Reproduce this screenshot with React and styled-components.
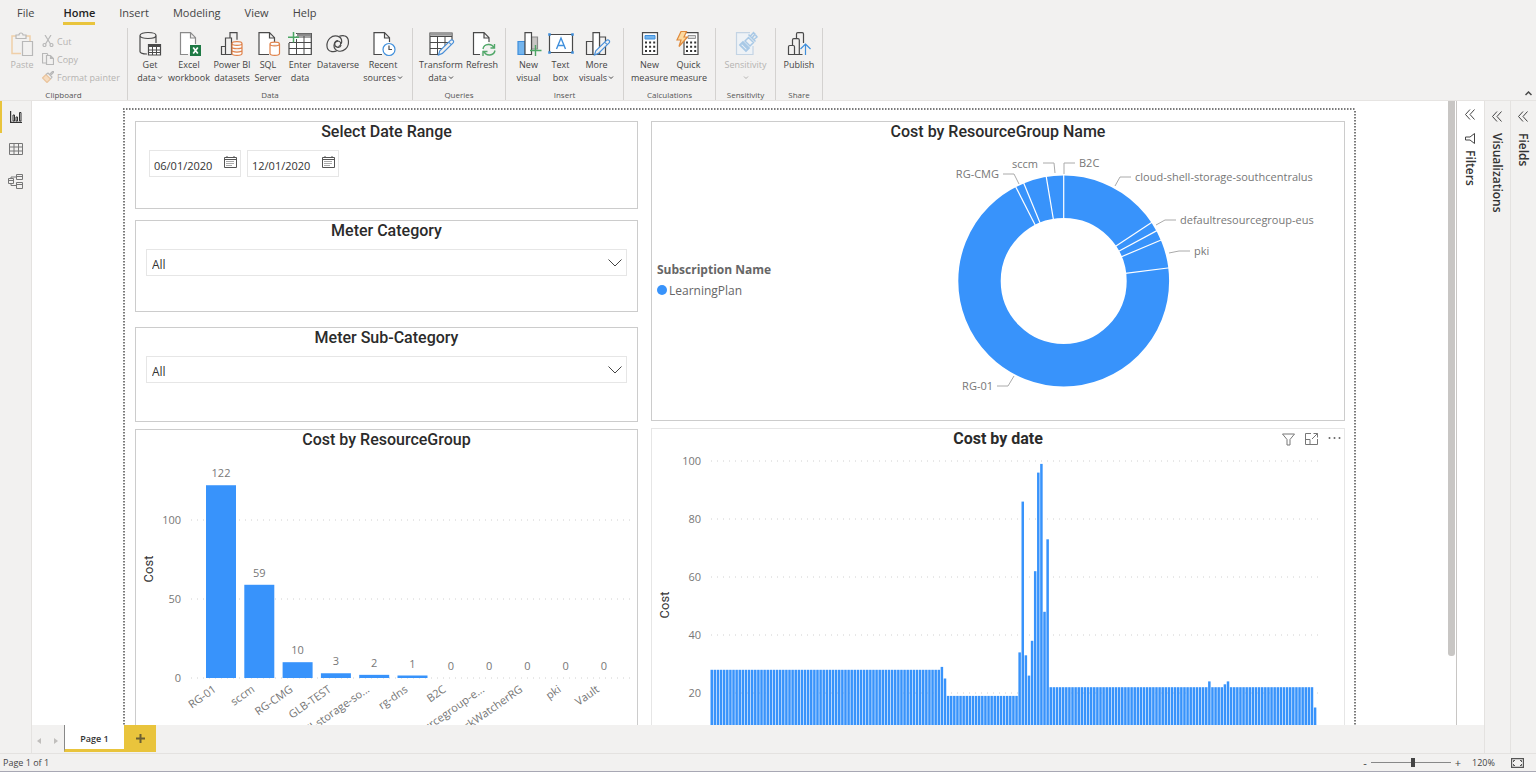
import React, { useState } from 'react';
import styled, { createGlobalStyle } from 'styled-components';

const BLUE = '#3893fb';
const YELLOW = '#e9c43c';

const GlobalStyle = createGlobalStyle`
    * {
        box-sizing: border-box;
    }
    body {
        margin: 0;
        background-color: #f2f1f0;
        color: #333;
        font-family: "Open Sans", "Noto Sans", sans-serif;
    }
    button, input, select {
        font-family: inherit;
        color: inherit;
    }
    button {
        background: transparent;
        border: none;
        padding: 0;
        cursor: pointer;
    }
`;

/* ---------- icons ---------- */

const Svg = ({ size = 24, w = size, h = size, box, children, ...rest }) => (
    <svg
        width={w}
        height={h}
        viewBox={box || `0 0 ${w} ${h}`}
        fill="none"
        stroke="#4a4a4a"
        strokeWidth="1.2"
        aria-hidden="true"
        {...rest}
    >
        {children}
    </svg>
);

const Pencil = () => (
    <path
        d="M9.5 23l1.3-4.3L21.5 8.4a1.7 1.7 0 0 1 2.6 2.5L13.4 21.4zM19.7 10.2l2.5 2.5"
        fill="#f2f1f0"
        stroke="#4a90d9"
    />
);

const icons = {
    paste: (
        <Svg>
            <path d="M11 21.500H2V4h4M16 4h4v5" stroke="#f0cfa8" strokeWidth="1.5" />
            <path d="M6 6.500h10V3h-3a2 2 0 0 0-4 0H6z" stroke="#b8b8b8" />
            <path d="M12.500 9.500h10v14h-10z" stroke="#b8b8b8" />
        </Svg>
    ),
    getData: (
        <Svg>
            <path d="M9 22c-4 0-7-1-7-2.500V3.500c0-4 16-4 16 0V11M2 3.500c0 4 16 4 16 0" />
            <path d="M10.500 12.500h12v10.500h-12z" fill="#fff" />
            <path d="M10.500 14h12" strokeWidth="2" />
            <path d="M10.500 18h12M10.500 20.500h12M14.500 13v10M18.500 13v10" strokeWidth="1" />
        </Svg>
    ),
    excel: (
        <Svg>
            <path d="M11 22.500H3.500V.7h10l5 5V12M13.500.7v5.300h5" fill="#fff" stroke="#8a8a8a" />
            <path d="M13 13h11v11H13z" fill="#1f7a45" stroke="none" />
            <path d="M16.200 15.500l4.600 6M20.800 15.500l-4.600 6" stroke="#fff" strokeWidth="1.700" />
        </Svg>
    ),
    datasets: (
        <Svg>
            <path d="M10 5.500V.7h7v7M5.500 22.500V6h6v16.500M1.500 22.500v-8h4v8zM5.500 22.500h6" />
            <path
                d="M12 11.500c0-2.500 10-2.500 10 0v10c0 2.500-10 2.500-10 0zM12 11.500c0 2.500 10 2.500 10 0M12 15c0 2.300 10 2.300 10 0M12 18.300c0 2.300 10 2.300 10 0"
                fill="#fff"
                stroke="#e0824a"
            />
        </Svg>
    ),
    sql: (
        <Svg>
            <path d="M13 22.500H3V.7h10.500l5 5V10M13.500.7v5.300h5" fill="#fff" />
            <path
                d="M14 12c0-2.500 9.500-2.500 9.500 0v9.500c0 2.500-9.500 2.500-9.500 0zM14 12c0 2.500 9.500 2.500 9.500 0"
                fill="#fff"
                stroke="#e0824a"
            />
        </Svg>
    ),
    enterData: (
        <Svg>
            <path d="M8 1.500h15.300v21H1V11" fill="#fff" />
            <path d="M9 2.700h14" stroke="#888" strokeWidth="2.500" />
            <path d="M1 10.500h22.300M1 16.500h22.300M8.500 7v15.500M16 4v18.500M8 5h15" strokeWidth="1" />
            <path d="M5.500 0v10.500M0 5.200h11" stroke="#4ca664" strokeWidth="1.500" />
        </Svg>
    ),
    dataverse: (
        <Svg>
            <path d="M18.500 3.800c5 1.200 5.200 9.200 1 13.200-4.300 4-11.500 2.400-11.500-3.400 0-3.200 2.700-5 5-4.300 2.500.8 2.300 4.700-.6 5.300" />
            <path d="M4.800 19.300c-5-1.200-5-9.200-.8-13.200 4.300-4 11.700-2.400 11.700 3.400 0 .8-.1 1.500-.5 2.200" />
            <path d="M4.800 19.300c3.500.8 6-.5 6-.5M18.500 3.800c-2.500-.6-5 .3-5 .3M12 8.500a3.400 3.400 0 1 0 3.200 4.600" />
        </Svg>
    ),
    recent: (
        <Svg>
            <path d="M11 22.500H3V.7h10.500l5 5V10M13.500.7v5.300h5" fill="#fff" />
            <circle cx="18" cy="17.500" r="6" fill="#fff" stroke="#3f8fdc" />
            <path d="M18 13.500v4h3" />
        </Svg>
    ),
    transform: (
        <Svg>
            <path d="M23 10V1H1v21.500h9" fill="#fff" />
            <path d="M1 2.500h22" stroke="#999" strokeWidth="2.500" />
            <path d="M1 4.500h22M1 10.500h19M1 16.500h12M8.500 5v17M16 5v9" strokeWidth="1" />
            <Pencil />
        </Svg>
    ),
    refresh: (
        <Svg>
            <path d="M10 22.500H3.500V.7H14l5 5V10M14 .7v5.300h5" fill="#fff" />
            <path
                d="M13 17c1-5.500 9-6 11-1M24.500 12v4h-4M25 18.500c-1 5.500-9 6-11 1M13 24v-4.500h4.500"
                stroke="#53a86a"
                strokeWidth="1.400"
            />
        </Svg>
    ),
    newVisual: (
        <Svg>
            <path d="M1 9.500h7v13H1z" fill="#74b5ee" stroke="#3f8fdc" />
            <path d="M14.500 5h6v12h-6z" fill="#c8c6c4" stroke="#8a8a8a" />
            <path d="M8 .7h6.500v21.800H8z" fill="#fff" />
            <path d="M18.500 13v11M13 18.500h11.500" stroke="#4ca664" strokeWidth="1.400" />
        </Svg>
    ),
    textBox: (
        <Svg w={26}>
            <path d="M1.500 2.500h23v18h-23z" fill="#fff" />
            <path d="M8.500 17L13 6l4.500 11M10 13.500h6" stroke="#3f8fdc" strokeWidth="1.400" />
            <path d="M.5 1.500h2v2h-2zM23.500 1.500h2v2h-2zM.5 19.500h2v2h-2zM23.500 19.500h2v2h-2z" fill="#3f8fdc" stroke="#3f8fdc" strokeWidth=".5" />
        </Svg>
    ),
    moreVisuals: (
        <Svg>
            <path d="M1.500 9.500H8v13H1.500z" />
            <path d="M14.500 5h6v17.500h-6z" />
            <path d="M8 .7h6.500v21.800H8z" fill="#fff" />
            <Pencil />
        </Svg>
    ),
    measure: (
        <Svg>
            <path d="M4.500.7h15v21.800h-15z" fill="#fff" />
            <path d="M7 3.500h10v3.500H7z" fill="#74b5ee" stroke="#3f8fdc" strokeWidth="1" />
            <path d="M7 10.500h10.500M7 14.700h10.500M7 18.900h10.500" stroke="#333" strokeWidth="2" strokeDasharray="2 2.100" />
        </Svg>
    ),
    quick: (
        <Svg>
            <path d="M7 .7h14v21.800H7z" fill="#fff" />
            <path d="M11 3.500h7.500v3H11z" fill="#ddd" stroke="#999" strokeWidth="1" />
            <path d="M9 10.500h10.500M9 14.700h10.500M9 18.900h10.500" stroke="#333" strokeWidth="2" strokeDasharray="2 2.100" />
            <path d="M4-.5h5.500L7 5h3.500L2 14.500 4 8H0z" fill="#fbd9a0" stroke="#e08a3c" />
        </Svg>
    ),
    sensitivity: (
        <Svg>
            <path d="M16 .7H2.500v21.800h16.500V14" stroke="#c4d4e4" fill="#eef2f6" />
            <path d="M6 13l3-3 6 6-3 3zM8 11l6 6" stroke="#a9c9e6" strokeWidth="1.800" />
            <path d="M11 9l3.500-3.500 5 5L16 14zM14.500 2.500l7 7M16.500 4l3-3.500 1.500 1.500-2.500 3.500M20 7.500L23 5l-1.500-2" stroke="#a9c9e6" strokeWidth="1.500" />
        </Svg>
    ),
    publish: (
        <Svg>
            <path d="M9.500 6V2q0-1.300 1.300-1.300h4.400q1.300 0 1.300 1.300v9M5.500 13V8q0-1.300 1.300-1.300h4.200q1.300 0 1.300 1.300v14.500M1.500 22.500v-7.700q0-1.300 1.300-1.300h3.400q1.300 0 1.300 1.300v7.700zM7.500 22.500h8" />
            <path d="M18.500 23V12M13.500 17l5-5 5 5" stroke="#3f8fdc" />
        </Svg>
    ),
    cut: (
        <Svg size={12} stroke="#b8b8b8">
            <path d="M3 0l5.500 9M9 0L3.500 9" />
            <circle cx="2.500" cy="10" r="1.500" />
            <circle cx="9.500" cy="10" r="1.500" />
        </Svg>
    ),
    copy: (
        <Svg size={12} stroke="#b8b8b8">
            <path d="M4 10H.5V.5H5L6 2M4.500 2.500h4l3 3v6h-7zM8.500 2.500v3h3" />
        </Svg>
    ),
    painter: (
        <Svg size={12}>
            <path d="M.5 7L4 3.500l4.500 4.500L5 11.500z" fill="#f6dcc0" stroke="#eac49c" />
            <path d="M4 3.500l2-1.500 4 4-1.500 2M7.500 3.500L10.500.5h1v1l-3 3" stroke="#b8b8b8" />
        </Svg>
    ),
};

const TinyChevron = ({ color = '#444' }) => (
    <Svg w={6} h={5} stroke={color} strokeWidth="1">
        <path d="M1 1.500l2 2 2-2" />
    </Svg>
);

const DoubleChevron = () => (
    <Svg w={10} h={11} stroke="#444" strokeWidth="1">
        <path d="M5 .5l-4.500 5 4.500 5M9.500.5L5 5.500l4.500 5" />
    </Svg>
);

const CalendarIcon = () => (
    <Svg w={13} h={12} stroke="#555" strokeWidth="1">
        <path d="M.5 1.500h12v10H.5zM.5 3.500h12M3 0v2M10 0v2" />
        <path d="M2.500 5.500h8M2.500 7.500h8M2.500 9.500h6" strokeDasharray="1 1" />
    </Svg>
);

/* ---------- ribbon ---------- */

const ribbonGroups = [
    {
        name: 'Data',
        width: 285,
        items: [
            { icon: 'getData', lines: ['Get', 'data'], width: 36, drop: true },
            { icon: 'excel', lines: ['Excel', 'workbook'], width: 42 },
            { icon: 'datasets', lines: ['Power BI', 'datasets'], width: 44 },
            { icon: 'sql', lines: ['SQL', 'Server'], width: 28 },
            { icon: 'enterData', lines: ['Enter', 'data'], width: 36 },
            { icon: 'dataverse', lines: ['Dataverse'], width: 40 },
            { icon: 'recent', lines: ['Recent', 'sources'], width: 50, drop: true },
        ],
    },
    {
        name: 'Queries',
        width: 93,
        items: [
            { icon: 'transform', lines: ['Transform', 'data'], width: 46, drop: true },
            { icon: 'refresh', lines: ['Refresh'], width: 36 },
        ],
    },
    {
        name: 'Insert',
        width: 118,
        items: [
            { icon: 'newVisual', lines: ['New', 'visual'], width: 34 },
            { icon: 'textBox', lines: ['Text', 'box'], width: 30 },
            { icon: 'moreVisuals', lines: ['More', 'visuals'], width: 42, drop: true },
        ],
    },
    {
        name: 'Calculations',
        width: 92,
        items: [
            { icon: 'measure', lines: ['New', 'measure'], width: 38 },
            { icon: 'quick', lines: ['Quick', 'measure'], width: 40 },
        ],
    },
    {
        name: 'Sensitivity',
        width: 60,
        items: [{ icon: 'sensitivity', lines: ['Sensitivity', ''], width: 50, drop: true, disabled: true }],
    },
    {
        name: 'Share',
        width: 47,
        items: [{ icon: 'publish', lines: ['Publish'], width: 38 }],
    },
];

const App = () => (
    <Shell>
        <GlobalStyle />
        <Ribbon />
        <Workspace>
            <Rail>
                <RailButton $active aria-label="Report">
                    <Svg size={12} stroke="#333">
                        <path d="M.6 0v11.400h11.400" />
                        <path d="M3 4h1.500v6H3zM6 6h1.500v4H6zM9.500 1.500H11V10H9.500z" strokeWidth="1" />
                    </Svg>
                </RailButton>
                <RailButton aria-label="Data">
                    <Svg w={14} h={12} stroke="#777" strokeWidth="1">
                        <path d="M.5.5h13v11H.5zM.5 4h13M.5 8h13M5 .5v11M9.500.5v11" />
                    </Svg>
                </RailButton>
                <RailButton aria-label="Model">
                    <Svg w={15} h={15} stroke="#777" strokeWidth="1">
                        <path d="M.5 4.500h5v5h-5zM8.500.5h6v5h-6zM8.500 8.500h6v6h-6zM.5 6.500h5M8.500 2.500h6M8.500 10.500h6M3 4.500V3h5.500M3 9.500v2h5.500" />
                    </Svg>
                </RailButton>
            </Rail>
            <Center>
                <CanvasRow>
                    <Report />
                    <ScrollTrack>
                        <ScrollThumb />
                    </ScrollTrack>
                    <Pane $light>
                        <DoubleChevron />
                        <Svg w={10} h={11} stroke="#444" strokeWidth="1">
                            <path d="M9.500.5v10L5 7H.5V4H5z" />
                        </Svg>
                        <PaneTitle>Filters</PaneTitle>
                    </Pane>
                </CanvasRow>
                <PageTabs>
                    <PageArrow aria-label="Previous page">
                        <Svg w={5} h={6} stroke="none" fill="#c0bebc">
                            <path d="M4 0v6L0 3z" />
                        </Svg>
                    </PageArrow>
                    <PageArrow aria-label="Next page">
                        <Svg w={5} h={6} stroke="none" fill="#c0bebc">
                            <path d="M1 0v6l4-3z" />
                        </Svg>
                    </PageArrow>
                    <PageTab>Page 1</PageTab>
                    <AddPage aria-label="New page">
                        <Svg size={9} stroke="#6b5f33" strokeWidth="2">
                            <path d="M4.500 0v9M0 4.500h9" />
                        </Svg>
                    </AddPage>
                </PageTabs>
            </Center>
            <Pane>
                <DoubleChevron />
                <PaneTitle>Visualizations</PaneTitle>
            </Pane>
            <Pane>
                <DoubleChevron />
                <PaneTitle>Fields</PaneTitle>
            </Pane>
        </Workspace>
        <StatusBar />
    </Shell>
);

const Ribbon = () => (
    <Header>
        <Tabs>
            {['File', 'Home', 'Insert', 'Modeling', 'View', 'Help'].map((tab) => (
                <Tab key={tab} $active={tab === 'Home'}>
                    {tab}
                </Tab>
            ))}
        </Tabs>
        <Groups>
            <Group $width={128}>
                <Clipboard>
                    <Tool $width={24} disabled>
                        {icons.paste}
                        <span>Paste</span>
                    </Tool>
                    <SmallTools>
                        <SmallTool disabled>{icons.cut} Cut</SmallTool>
                        <SmallTool disabled>{icons.copy} Copy</SmallTool>
                        <SmallTool disabled>{icons.painter} Format painter</SmallTool>
                    </SmallTools>
                </Clipboard>
                <GroupName>Clipboard</GroupName>
            </Group>
            {ribbonGroups.map((group) => (
                <Group key={group.name} $width={group.width}>
                    <Tools>
                        {group.items.map((item) => (
                            <Tool key={item.icon} $width={item.width} disabled={item.disabled}>
                                {icons[item.icon]}
                                {item.lines.map((line, n) => (
                                    <span key={n}>
                                        {line}
                                        {item.drop && n === 1 && (
                                            <TinyChevron color={item.disabled ? '#b5b3b1' : '#444'} />
                                        )}
                                    </span>
                                ))}
                            </Tool>
                        ))}
                    </Tools>
                    <GroupName>{group.name}</GroupName>
                </Group>
            ))}
            <Collapse aria-label="Collapse ribbon">
                <Svg w={7} h={5} strokeWidth="1.500">
                    <path d="M.5 4l3-3 3 3" />
                </Svg>
            </Collapse>
        </Groups>
    </Header>
);

/* ---------- report page ---------- */

const Report = () => {
    const [from, setFrom] = useState('06/01/2020');
    const [to, setTo] = useState('12/01/2020');
    return (
        <Page>
            <Column>
                <Card $height={88}>
                    <CardTitle>Select Date Range</CardTitle>
                    <DateRow>
                        <DateBox>
                            <input aria-label="Start date" value={from} onChange={(e) => setFrom(e.target.value)} />
                            <CalendarIcon />
                        </DateBox>
                        <DateBox>
                            <input aria-label="End date" value={to} onChange={(e) => setTo(e.target.value)} />
                            <CalendarIcon />
                        </DateBox>
                    </DateRow>
                </Card>
                <Card $height={92} $gap={11}>
                    <Slicer title="Meter Category" id="category" />
                </Card>
                <Card $height={95} $gap={15}>
                    <Slicer title="Meter Sub-Category" id="subcategory" />
                </Card>
                <Card $gap={7}>
                    <CardTitle>Cost by ResourceGroup</CardTitle>
                    <GroupChart />
                </Card>
            </Column>
            <Column>
                <Card $height={300}>
                    <CardTitle>Cost by ResourceGroup Name</CardTitle>
                    <DonutRow>
                        <Legend>
                            <b>Subscription Name</b>
                            <span>LearningPlan</span>
                        </Legend>
                        <Donut />
                    </DonutRow>
                </Card>
                <Card $gap={7} $soft>
                    <CardTitle $bold>Cost by date</CardTitle>
                    <CardActions>
                        <button aria-label="Filters">
                            <Svg w={13} h={13} stroke="#777" strokeWidth="1">
                                <path d="M.5 1h12L8 6.500V12L5 12V6.500z" />
                            </Svg>
                        </button>
                        <button aria-label="Focus mode">
                            <Svg w={13} h={12} stroke="#777" strokeWidth="1">
                                <path d="M6 .5H.5v11h12V6M8.500.5h4v4M12.500.5L7 6M.5 6.500h4.500v5" />
                            </Svg>
                        </button>
                        <button aria-label="More options">
                            <Svg w={13} h={12} stroke="none" fill="#666">
                                <circle cx="1.500" cy="5" r="1" />
                                <circle cx="6.500" cy="5" r="1" />
                                <circle cx="11.500" cy="5" r="1" />
                            </Svg>
                        </button>
                    </CardActions>
                    <DateChart />
                </Card>
            </Column>
        </Page>
    );
};

const Slicer = ({ title, id }) => (
    <>
        <CardTitle as="label" htmlFor={id}>
            {title}
        </CardTitle>
        <SelectBox>
            <select id={id}>
                <option>All</option>
            </select>
            <Svg w={14} h={8} stroke="#444" strokeWidth="1">
                <path d="M.5.5L7 7 13.500.5" />
            </Svg>
        </SelectBox>
    </>
);

const groups = [
    ['RG-01', 122],
    ['sccm', 59],
    ['RG-CMG', 10],
    ['GLB-TEST', 3],
    ['cloud-shell-storage-so...', 2],
    ['rg-dns', 1],
    ['B2C', 0],
    ['defaultresourcegroup-e...', 0],
    ['NetworkWatcherRG', 0],
    ['pki', 0],
    ['Vault', 0],
];

const GroupChart = () => {
    const y = (v) => 228 - v * 1.58;
    return (
        <Chart viewBox="0 0 501 320">
            {[0, 50, 100].map((v) => (
                <g key={v}>
                    <GridLine x1="55" x2="499" y1={y(v)} y2={y(v)} />
                    <text x="45" y={y(v) + 4} textAnchor="end">
                        {v}
                    </text>
                </g>
            ))}
            {groups.map(([name, value], i) => {
                const cx = 85 + i * 38.3;
                const h = value ? Math.max(value * 1.58, 2.5) : 0;
                return (
                    <g key={name}>
                        <rect x={cx - 15} y={228 - h} width="30" height={h} fill={BLUE} />
                        <text x={cx} y={220 - h} textAnchor="middle">
                            {value}
                        </text>
                        <text
                            transform={`translate(${cx - 4} 241) rotate(-35)`}
                            textAnchor="end"
                        >
                            {name}
                        </text>
                    </g>
                );
            })}
            <AxisTitle transform="translate(17 119) rotate(-90)" textAnchor="middle">
                Cost
            </AxisTitle>
        </Chart>
    );
};

// daily cost, June to December
const daily = [
    ...Array(74).fill(28),
    29, 25,
    ...Array(23).fill(19),
    34, 86, 33, 26, 38, 62, 96, 99, 48, 73,
    ...Array(51).fill(22),
    24, 22, 22, 22, 22, 23, 24,
    ...Array(27).fill(22),
    15,
];

const DateChart = () => {
    const y = (v) => 302 - v * 2.9;
    return (
        <Chart viewBox="0 0 692 320">
            {[20, 40, 60, 80, 100].map((v) => (
                <g key={v}>
                    <GridLine x1="59" x2="666" y1={y(v)} y2={y(v)} />
                    <text x="49" y={y(v) + 4} textAnchor="end">
                        {v}
                    </text>
                </g>
            ))}
            {daily.map((v, i) => (
                <rect key={i} x={58.5 + i * 3.11} y={y(v)} width="2.5" height={v * 2.9} fill={BLUE} />
            ))}
            <AxisTitle transform="translate(17 156) rotate(-90)" textAnchor="middle">
                Cost
            </AxisTitle>
        </Chart>
    );
};

const donutLabels = [
    { text: 'sccm', x: 261, y: 24, anchor: 'end', line: 'M266 19h11l1 10' },
    { text: 'B2C', x: 302, y: 23, line: 'M298 19h-11v11' },
    { text: 'RG-CMG', x: 222, y: 34, anchor: 'end', line: 'M226 30h11l5 10' },
    { text: 'cloud-shell-storage-southcentralus', x: 358, y: 37, line: 'M354 33h-11l-5 9' },
    { text: 'defaultresourcegroup-eus', x: 403, y: 80, line: 'M399 76h-11l-9 5' },
    { text: 'pki', x: 417, y: 111, line: 'M413 107h-11l-10 2' },
    { text: 'RG-01', x: 216, y: 246, anchor: 'end', line: 'M220 242h11l6-10' },
];

const Donut = () => {
    const cx = 286.7;
    const cy = 137;
    const cuts = [0, 56.3, 61.6, 67.2, 82.9, -27, -22.2, -9.5];
    return (
        <Chart viewBox="0 0 567 276">
            <circle cx={cx} cy={cy} r="84.200" fill="none" stroke={BLUE} strokeWidth="42.400" />
            {cuts.map((a) => (
                <line
                    key={a}
                    x1={cx}
                    x2={cx}
                    y1={cy - 62}
                    y2={cy - 107}
                    stroke="#fff"
                    strokeWidth="1.200"
                    transform={`rotate(${a} ${cx} ${cy})`}
                />
            ))}
            {donutLabels.map(({ text, x, y, anchor, line }) => (
                <g key={text}>
                    <path d={line} fill="none" stroke="#aaa" />
                    <text x={x} y={y} textAnchor={anchor}>
                        {text}
                    </text>
                </g>
            ))}
        </Chart>
    );
};

const StatusBar = () => {
    const [zoom, setZoom] = useState(120);
    return (
        <Status>
            <span>Page 1 of 1</span>
            <Zoom>
                <button aria-label="Zoom out">-</button>
                <input
                    type="range"
                    aria-label="Zoom"
                    min="10"
                    max="217"
                    value={zoom}
                    onChange={(e) => setZoom(Number(e.target.value))}
                />
                <button aria-label="Zoom in">+</button>
                <output>{zoom}%</output>
                <button aria-label="Fit to page">
                    <Svg w={13} h={10} stroke="#555">
                        <path d="M.6.6h11.800v8.800H.6z" />
                        <path d="M2.500 4V2.500H4M9 2.500h1.500V4M10.500 6v1.500H9M4 7.500H2.500V6" strokeWidth="1" />
                    </Svg>
                </button>
            </Zoom>
        </Status>
    );
};

/* ---------- styles ---------- */

const Shell = styled.div`
    height: 100vh;
    display: flex;
    flex-direction: column;
    overflow: hidden;
`;

const Header = styled.header`
    flex: none;
    border-bottom: 1px solid #e6e4e2;
`;

const Tabs = styled.nav`
    display: flex;
    gap: 24px;
    height: 28px;
    padding: 4px 17px 3px;
`;

const Tab = styled.button`
    font-size: 11px;
    line-height: 18px;
    color: ${(p) => (p.$active ? '#222' : '#444')};
    font-weight: ${(p) => (p.$active ? 600 : 400)};
    border-bottom: 3px solid ${(p) => (p.$active ? YELLOW : 'transparent')};

    &:first-child {
        margin-right: 5px;
    }
`;

const Groups = styled.div`
    display: flex;
    height: 72px;
`;

const Group = styled.div`
    width: ${(p) => p.$width}px;
    flex: none;
    display: flex;
    flex-direction: column;
    justify-content: space-between;
    padding-top: 4px;
    border-right: 1px solid #d4d2d0;
`;

const Tools = styled.div`
    display: flex;
    justify-content: center;
`;

const Clipboard = styled.div`
    display: flex;
    gap: 8px;
    height: 54px;
    padding-left: 10px;
`;

const Tool = styled.button`
    width: ${(p) => p.$width}px;
    display: flex;
    flex-direction: column;
    align-items: center;
    font-size: 9px;
    line-height: 13px;
    color: #444;
    white-space: nowrap;

    &:disabled {
        color: #b5b3b1;
    }
    > svg {
        flex: none;
        overflow: visible;
        margin-bottom: 2px;
    }
    span {
        display: flex;
        align-items: center;
        gap: 1px;
        min-height: 13px;
    }
`;

const SmallTools = styled.div`
    display: flex;
    flex-direction: column;
    justify-content: center;
`;

const SmallTool = styled.button`
    display: flex;
    align-items: center;
    gap: 3px;
    height: 19px;
    font-size: 9px;
    white-space: nowrap;

    &:disabled {
        color: #b5b3b1;
    }
`;

const GroupName = styled.div`
    text-align: center;
    font-size: 8px;
    line-height: 11px;
    color: #555;
`;

const Collapse = styled.button`
    align-self: flex-end;
    display: flex;
    margin: 0 4px 4px auto;
`;

const Workspace = styled.div`
    flex: 1;
    min-height: 0;
    display: flex;
`;

const Rail = styled.nav`
    width: 32px;
    flex: none;
    border-right: 1px solid #e4e2e0;
`;

const RailButton = styled.button`
    width: 100%;
    height: 32px;
    display: flex;
    align-items: center;
    justify-content: center;
    border-left: 2px solid ${(p) => (p.$active ? YELLOW : 'transparent')};
    padding-right: 2px;
`;

const Center = styled.main`
    flex: 1;
    min-width: 0;
    display: flex;
    flex-direction: column;
`;

const CanvasRow = styled.div`
    flex: 1;
    min-height: 0;
    display: flex;
    overflow: hidden;
    background-color: #fff;
`;

const dots = (direction) => `repeating-linear-gradient(${direction}, #7a7a7a 0 1px, #bbb 1px 2px, #fff 2px 3px)`;

const Page = styled.div`
    flex: 1;
    min-width: 0;
    align-self: flex-start;
    display: grid;
    grid-template-columns: 503fr 694fr;
    gap: 13px;
    margin: 7px 92px 0 91px;
    padding: 13px 11px 13px 12px;
    background:
        ${dots('to right')} top / 100% 2px no-repeat,
        ${dots('to bottom')} left / 2px 100% no-repeat,
        ${dots('to bottom')} right / 2px 100% no-repeat,
        ${dots('to right')} bottom / 100% 2px no-repeat;
`;

const Column = styled.div`
    min-width: 0;
    display: flex;
    flex-direction: column;
`;

const Card = styled.section`
    position: relative;
    min-height: ${(p) => p.$height || 0}px;
    margin-top: ${(p) => p.$gap || 0}px;
    border: 1px solid ${(p) => (p.$soft ? '#e6e6e6' : '#ccc')};
    background-color: #fff;
`;

const CardTitle = styled.h2`
    display: block;
    margin: 0;
    text-align: center;
    font-family: Roboto, sans-serif;
    font-size: 16px;
    line-height: 20px;
    font-weight: ${(p) => (p.$bold ? 700 : 500)};
    color: #2b2b2b;
`;

const CardActions = styled.div`
    position: absolute;
    top: 4px;
    right: 3px;
    display: flex;
    gap: 10px;

    button {
        display: flex;
    }
`;

const DateRow = styled.div`
    display: flex;
    gap: 6px;
    margin: 8px 13px;
`;

const DateBox = styled.div`
    display: flex;
    width: 92px;
    height: 27px;
    padding: 5px 3px 0 4px;
    border: 1px solid #e6e6e6;

    input {
        flex: 1;
        min-width: 0;
        height: 18px;
        padding: 0;
        border: none;
        outline: none;
        font-size: 11px;
        color: #333;
    }
    svg {
        flex: none;
    }
`;

const SelectBox = styled.div`
    display: grid;
    align-items: center;
    margin: 8px 10px;
    border: 1px solid #e6e6e6;

    > * {
        grid-area: 1 / 1;
    }
    select {
        appearance: none;
        width: 100%;
        height: 25px;
        padding: 3px 5px 0;
        border: none;
        background: transparent;
        font-size: 12px;
    }
    svg {
        justify-self: end;
        margin-right: 4px;
        pointer-events: none;
    }
`;

const DonutRow = styled.div`
    display: flex;
    align-items: center;
    margin-top: 2px;

    > svg {
        flex: 1;
        min-width: 0;
    }
`;

const Legend = styled.div`
    width: 125px;
    flex: none;
    padding: 0 0 4px 5px;
    display: flex;
    flex-direction: column;
    font-size: 12px;
    line-height: 21px;
    color: #666;
    white-space: nowrap;

    span::before {
        content: '';
        display: inline-block;
        width: 10px;
        height: 10px;
        margin-right: 2px;
        border-radius: 50%;
        background-color: ${BLUE};
    }
`;

const Chart = styled.svg`
    display: block;
    width: 100%;

    text {
        font-size: 11px;
        fill: #777;
    }
`;

const AxisTitle = styled.text`
    && {
        font-family: Roboto, sans-serif;
        font-size: 13px;
        fill: #333;
    }
`;

const GridLine = styled.line`
    stroke: #d0d0d0;
    stroke-dasharray: 1 5;
`;

const ScrollTrack = styled.div`
    width: 8px;
    flex: none;
    border-right: 1px solid #fff;
`;

const ScrollThumb = styled.div`
    height: 89%;
    background-color: #c8c6c4;
    border-radius: 0 0 3px 3px;
`;

const Pane = styled.aside`
    width: ${(p) => (p.$light ? 28 : 26)}px;
    flex: none;
    display: flex;
    flex-direction: column;
    align-items: center;
    gap: ${(p) => (p.$light ? 6 : 11)}px;
    padding: ${(p) => (p.$light ? 8 : 10)}px 2px 0 0;
    border-left: 1px solid ${(p) => (p.$light ? '#c8c6c4' : '#e4e2e0')};
    background-color: ${(p) => (p.$light ? '#fff' : 'transparent')};

    svg {
        flex: none;
    }
    svg + svg {
        margin-top: 7px;
    }
`;

const PaneTitle = styled.span`
    writing-mode: vertical-rl;
    font-size: 12px;
    line-height: 16px;
    font-weight: 600;
    color: #333;
`;

const PageTabs = styled.div`
    flex: none;
    display: flex;
    height: 28px;
    padding-bottom: 1px;
`;

const PageArrow = styled.button`
    width: 16px;
    padding-right: 2px;
`;

const PageTab = styled.button`
    width: 60px;
    padding-top: 3px;
    background-color: #fff;
    border-left: 1px solid #888;
    border-bottom: 3px solid ${YELLOW};
    font-size: 9px;
    font-weight: 600;
`;

const AddPage = styled.button`
    width: 32px;
    display: flex;
    align-items: center;
    justify-content: center;
    background-color: ${YELLOW};
`;

const Status = styled.footer`
    flex: none;
    display: flex;
    align-items: center;
    justify-content: space-between;
    height: 19px;
    padding: 0 12px 0 3px;
    border-top: 1px solid #e4e2e0;
    border-bottom: 1px solid #a8a8b4;
    font-size: 9px;
    color: #444;
`;

const Zoom = styled.div`
    display: flex;
    align-items: center;
    gap: 4px;

    button {
        display: flex;
        font-size: 11px;
        line-height: 16px;
    }
    output {
        width: 42px;
        padding-left: 7px;
    }
    input {
        appearance: none;
        width: 80px;
        height: 9px;
        margin: 0;
        background: linear-gradient(#888, #888) center / 100% 1px no-repeat;
    }
    input::-webkit-slider-thumb {
        appearance: none;
        width: 4px;
        height: 9px;
        background-color: #444;
    }
`;

export default App;
